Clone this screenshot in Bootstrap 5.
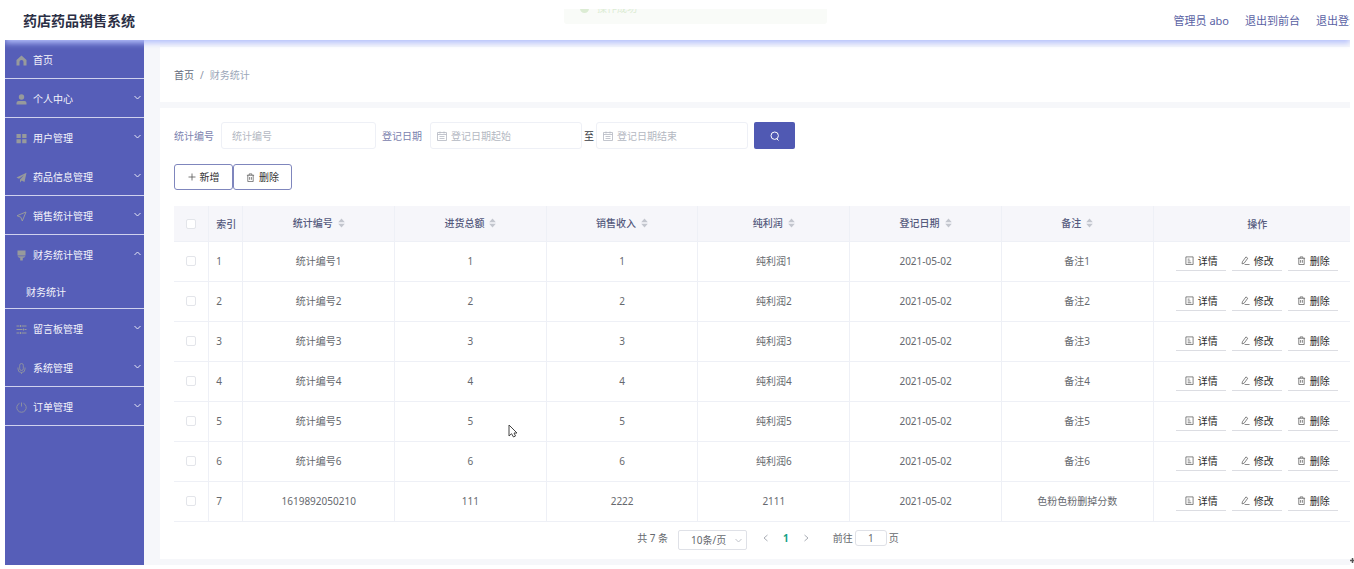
<!DOCTYPE html>
<html lang="zh-CN">
<head>
<meta charset="utf-8">
<meta name="viewport" content="width=device-width, initial-scale=1">
<title>药店药品销售系统</title>
<link href="https://cdn.jsdelivr.net/npm/bootstrap@5.3.0/dist/css/bootstrap.min.css" rel="stylesheet">
<style>
:root{--brand:#565eb8;--ink:#66696e;--line:#eef0f6;--pale:#f6f6fa}
body{font:10px/16px "Noto Sans","Noto Sans CJK SC",sans-serif;color:var(--ink);background:#fff}
.frame{margin:9px 4px 5px 5px;min-height:calc(100vh - 14px);overflow:hidden}
.topbar{height:31px;padding:0 0 8px 18px;background:#fff;z-index:2;box-shadow:0 3px 6px #b4bffc}
.topbar h1{font-size:14px;line-height:20px;color:#2b2f45}
.topbar nav{gap:16px;font-size:11px;margin-right:-10px;white-space:nowrap;color:#5a62a4}
.topbar nav a{color:inherit}
.toast-bar{top:-17px;left:559px;width:263px;height:32px;background:#f9fbf8;border-radius:3px;color:#dcecd4;padding:0 16px;gap:8px}
.side{width:139px;background:var(--brand);color:#fff}
.side .item{display:flex;align-items:center;width:100%;height:39px;gap:6px;padding:2px 3px 0 11px;border:0;border-bottom:1px solid transparent;background:none;color:#f4f4fb;text-align:left;text-decoration:none}
.side .lined{border-bottom-color:#d0d2ee}
.side .sub{height:35px;padding-left:21px}
.side .ic{width:11px;height:11px;color:#979a9c}
.side .chev{width:7px;height:5px;margin:0 0 3px auto;color:#e6e7f5}
svg{display:block;flex:none;fill:none;stroke:currentColor}
.main{background:#f6f7fa;padding:7px 0 6px 16px}
.panel{background:#fff}
.crumbs{height:55px;padding-left:14px;margin-bottom:6px}
.crumbs .breadcrumb-item+.breadcrumb-item{padding-left:6px;color:#9aa6b8}
.crumbs .breadcrumb-item+.breadcrumb-item::before{padding-right:6px;color:#8a93a5}
.crumbs a{color:#646b7c}
.body-panel{padding:14px 0 8px 14px}
.filters{height:27px;color:#7b82ae}
.box{display:flex;align-items:center;height:27px;border:1px solid var(--line);border-radius:3px;color:#b4b8c2;background:#fff}
.box input{border:0;outline:0;padding:0;width:100%;min-width:0;background:none;color:var(--ink)}
.box input::placeholder{color:#b4b8c2;opacity:1}
.w-code{width:155px;padding:0 10px;margin:0 6px 0 7px}
.w-date{width:152px;padding:0 6px;gap:4px}
.w-date svg{stroke-width:.8}
.mid{color:#3a3d45;padding:0 2px}
.go{width:41px;height:27px;margin-left:6px;border:0;border-radius:2px;background:#5059b3;color:#fff}
.tools{margin:15px 0 16px}
.tool{width:59px;height:26px;gap:4px;border:1px solid #7f86bd;border-radius:3px;background:#fff;color:#333}
.tool svg,.act svg{color:#555;stroke-width:.8}
.grid{width:100%;table-layout:fixed;border-collapse:separate;border-spacing:0;text-align:center}
.grid th,.grid td{padding:0 0 1px;border-bottom:1px solid var(--line);border-right:1px solid var(--line);height:40px;vertical-align:middle}
.grid th{height:36px;padding:0;background:var(--pale);color:#555a7d;font-weight:500}
.grid th:last-child,.grid td:last-child{border-right:0;padding-left:11px}
.grid .idx{text-align:left;padding-left:7px}
.grid input{appearance:none;display:block;width:10px;height:10px;margin:0 auto;border:1px solid #e3e5ea;border-radius:2px;background:#fff}
.sorter{border:0;background:none;padding:0;color:inherit;font-weight:500;gap:5px;margin-bottom:2px}
.sorter svg{fill:#c3c6ce;stroke:none}
.act{width:50px;height:20px;gap:4px;border:0;border-bottom:1px solid #dcdde2;background:none;color:#2c2c2c;padding:0}
.pager{padding:8px 0 0 12px;height:29px}
.size{width:69px;height:20px;border:1px solid #dfe1e7;border-radius:2px;padding:0 4px 0 12px;margin:0 16px 0 10px}
.size select{appearance:none;border:0;background:none;padding:0;width:100%;outline:0;color:var(--ink)}
.pager button{border:0;background:none;padding:0;color:#a9adb5}
.pager .now{color:#14a184;font-weight:700;margin:0 15px}
.pager .jump{width:32px;height:16px;border:1px solid #dfe1e7;border-radius:3px;text-align:center;padding:0;margin:0 2px;color:var(--ink)}
.pointer{left:508px;top:424px}
.mark-end{right:0;top:556px}
</style>
</head>
<body>
<svg width="0" height="0" class="position-absolute">
<symbol id="trash" viewBox="0 0 10 10"><path d="M1 2.500h8M3.500 2.500V1h3v1.500M2 2.500V9.500h6V2.500M4 4.500v3M6 4.500v3"/></symbol>
<symbol id="doc" viewBox="0 0 10 10"><path d="M1 1h8v8.500H1zM3 3.500h2M3 5.500h3M3 7.500h4"/></symbol>
<symbol id="edit" viewBox="0 0 10 10"><path d="M1.500 6.500L5.500 1l2 1.500-4 5.500-2.300.8zM4 9.500h5.500"/></symbol>
<symbol id="cal" viewBox="0 0 10 10"><path d="M.5 1.500h9v8h-9zM.5 3.500h9M3 .5v2M7 .5v2M2.500 5.500h5M2.500 7.500h5"/></symbol>
<symbol id="down" viewBox="0 0 7 5"><path d="M.5 1l3 3 3-3"/></symbol>
<symbol id="up" viewBox="0 0 7 5"><path d="M.5 4l3-3 3 3"/></symbol>
<symbol id="sort" viewBox="0 0 7 10"><path d="M3.500.5L6.800 4.300H.2zM3.500 9.500L.2 5.700h6.600z"/></symbol>
</svg>
<div class="frame d-flex flex-column position-relative">
  <header class="topbar d-flex align-items-center justify-content-between position-relative">
    <h1 class="m-0 fw-bold">药店药品销售系统</h1>
    <nav class="d-flex"><span>管理员 abo</span><a href="#" class="text-decoration-none">退出到前台</a><a href="#" class="text-decoration-none">退出登录</a></nav>
    <div class="toast-bar position-absolute d-flex align-items-center" role="status"><svg width="9" height="9" viewBox="0 0 9 9"><circle cx="4.500" cy="4.500" r="4.500" fill="currentColor" stroke="none"/></svg>操作成功</div>
  </header>
  <div class="d-flex flex-grow-1">
    <aside class="side flex-shrink-0">
      <a href="#" class="item lined"><svg class="ic" viewBox="0 0 11 11"><path d="M5.500.5L10.500 5v5.500h-3V7a2 2 0 0 0-4 0v3.500h-3V5z" fill="currentColor" stroke="none"/></svg>首页</a>
      <button class="item lined"><svg class="ic" viewBox="0 0 11 11"><g fill="currentColor" stroke="none"><circle cx="5.500" cy="3" r="2.700"/><path d="M.5 10.500V9q0-2 2-2h6q2 0 2 2v1.500z"/></g></svg>个人中心<svg class="chev"><use href="#down"/></svg></button>
      <button class="item"><svg class="ic" viewBox="0 0 11 11"><path d="M.5 1h4.300v4H.5zM6.200 1h4.300v4H6.200zM.5 6.300h4.300v4H.5zM6.200 6.300h4.300v4H6.200z" fill="currentColor" stroke="none"/></svg>用户管理<svg class="chev"><use href="#down"/></svg></button>
      <button class="item lined"><svg class="ic" viewBox="0 0 11 11"><path d="M10.500.7L.5 5.500l2.500 1.300 5-3.800-4 4.500v3l1.700-2 2.800 1.500z" fill="currentColor" stroke="none"/></svg>药品信息管理<svg class="chev"><use href="#down"/></svg></button>
      <button class="item lined"><svg class="ic" viewBox="0 0 11 11"><path d="M10 1L1 4.700l3.800 1.500L6.300 10z"/></svg>销售统计管理<svg class="chev"><use href="#down"/></svg></button>
      <button class="item"><svg class="ic" viewBox="0 0 11 11"><path d="M1.500.5h8v5h-8zM1.500 6.200h8L8 7.800H6.800v2.700H4.200V7.800H3z" fill="currentColor" stroke="none"/></svg>财务统计管理<svg class="chev"><use href="#up"/></svg></button>
      <a href="#" class="item sub lined">财务统计</a>
      <button class="item"><svg class="ic" viewBox="0 0 11 11"><path d="M.5 2h3M5.500 2h5M.5 5.500h6M8.500 5.500h2M.5 9h3M5.500 9h5M4.500 1v2M7.500 4.500v2M4.500 8v2"/></svg>留言板管理<svg class="chev"><use href="#down"/></svg></button>
      <button class="item lined"><svg class="ic" viewBox="0 0 11 11"><path d="M3.700 2.300a1.800 1.800 0 0 1 3.600 0v3.400a1.800 1.800 0 0 1-3.600 0zM2 4.500V6a3.500 3.500 0 0 0 7 0V4.500M5.500 9.500V11" stroke-width=".8"/></svg>系统管理<svg class="chev"><use href="#down"/></svg></button>
      <button class="item lined"><svg class="ic" viewBox="0 0 11 11"><path d="M3.500 1.300a4.700 4.700 0 1 0 4 0M5.500.5v4" stroke-width=".8"/></svg>订单管理<svg class="chev"><use href="#down"/></svg></button>
    </aside>
    <main class="main flex-grow-1">
      <nav class="panel crumbs d-flex align-items-center" aria-label="breadcrumb"><ol class="breadcrumb m-0"><li class="breadcrumb-item"><a href="#" class="text-decoration-none">首页</a></li><li class="breadcrumb-item">财务统计</li></ol></nav>
      <section class="panel body-panel">
        <form class="filters d-flex align-items-center">
          <label for="code">统计编号</label><div class="box w-code"><input id="code" placeholder="统计编号"></div>
          <label for="from" class="me-2">登记日期</label><div class="box w-date"><svg width="10" height="10"><use href="#cal"/></svg><input id="from" placeholder="登记日期起始"></div>
          <label for="to" class="mid">至</label><div class="box w-date"><svg width="10" height="10"><use href="#cal"/></svg><input id="to" placeholder="登记日期结束"></div>
          <button type="button" class="go d-flex align-items-center justify-content-center" aria-label="查询"><svg width="10" height="10" viewBox="0 0 10 10"><circle cx="4.700" cy="4.700" r="3.700"/><path d="M6.500 7.500L8.500 9.500"/></svg></button>
        </form>
        <div class="tools d-flex">
          <button class="tool d-flex align-items-center justify-content-center"><svg width="8" height="8" viewBox="0 0 8 8"><path d="M4 .5v7M.5 4h7"/></svg>新增</button>
          <button class="tool d-flex align-items-center justify-content-center"><svg width="9" height="9"><use href="#trash"/></svg>删除</button>
        </div>
        <table class="grid">
          <colgroup><col style="width:3%"><col style="width:2.900%"><col style="width:12.900%"><col style="width:12.900%"><col style="width:12.900%"><col style="width:12.900%"><col style="width:12.900%"><col style="width:12.900%"><col></colgroup>
          <thead><tr><th><input type="checkbox" aria-label="全选"></th><th class="idx">索引</th></tr></thead>
          <tbody></tbody>
        </table>
        <div class="pager d-flex align-items-start justify-content-center">
          <span>共 7 条</span>
          <div class="size d-flex align-items-center"><select aria-label="每页条数"><option>10条/页</option></select><svg width="7" height="5" color="#c0c3ca"><use href="#down"/></svg></div>
          <button aria-label="上一页"><svg width="5" height="16" viewBox="0 0 5 16"><path d="M4.500 5L1 8l3.500 3"/></svg></button>
          <button class="now">1</button>
          <button aria-label="下一页"><svg width="5" height="16" viewBox="0 0 5 16"><path d="M.5 5L4 8 .5 11"/></svg></button>
          <label for="jump" class="ms-4">前往</label><input id="jump" class="jump" value="1"><span>页</span>
        </div>
      </section>
    </main>
  </div>
</div>
<svg class="pointer position-absolute" width="10" height="14" viewBox="0 0 10 14"><path d="M1 1v11l2.500-2.300L5.500 13l2-1-1.500-3H9z" fill="#fff" stroke="#444"/></svg>
<svg class="mark-end position-absolute" width="4" height="9" viewBox="0 0 4 9"><path d="M0 4.500h4M2.500 2v5" stroke="#555" stroke-width="1.500"/></svg>
<script src="https://cdn.jsdelivr.net/npm/bootstrap@5.3.0/dist/js/bootstrap.bundle.min.js"></script>
<script>
const head = document.querySelector('.grid thead tr');
['统计编号','进货总额','销售收入','纯利润','登记日期','备注'].forEach(t => head.insertAdjacentHTML('beforeend',
  `<th><button class="sorter d-inline-flex align-items-center">${t}<svg width="7" height="10"><use href="#sort"/></svg></button></th>`));
head.insertAdjacentHTML('beforeend', '<th>操作</th>');
const rows = [1,2,3,4,5,6].map(n => ['统计编号'+n, n, n, '纯利润'+n, '2021-05-02', '备注'+n]);
rows.push(['1619892050210', 111, 2222, 2111, '2021-05-02', '色粉色粉删掉分数']);
const acts = [['doc','详情'],['edit','修改'],['trash','删除']].map(([i,t]) =>
  `<button class="act d-flex align-items-center justify-content-center"><svg width="9" height="9"><use href="#${i}"/></svg>${t}</button>`).join('');
document.querySelector('.grid tbody').innerHTML = rows.map((r, i) =>
  `<tr><td><input type="checkbox" aria-label="选择第${i+1}行"></td><td class="idx">${i+1}</td>${r.map(c => `<td>${c}</td>`).join('')}<td><div class="d-flex justify-content-center" style="gap:6px">${acts}</div></td></tr>`).join('');
</script>
</body>
</html>
